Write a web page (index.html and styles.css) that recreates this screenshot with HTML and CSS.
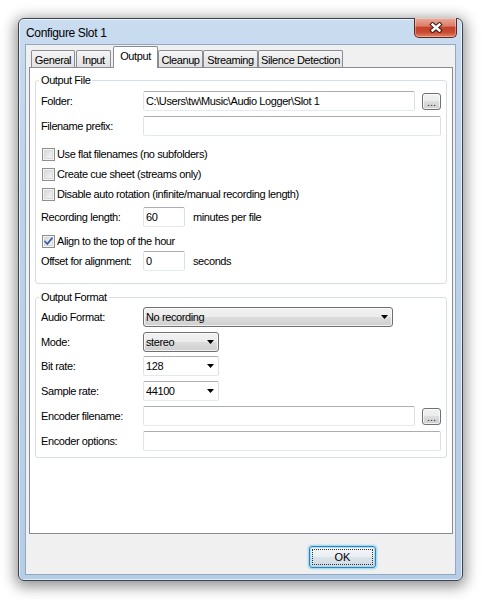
FILE: index.html
```html
<!DOCTYPE html>
<html>
<head>
<meta charset="utf-8">
<title>Configure Slot 1</title>
<link rel="stylesheet" href="styles.css">
</head>
<body>
<div class="window">
  <div class="titlebar">
    <span class="title">Configure Slot 1</span>
    <div class="close">
      <svg width="14" height="11" viewBox="0 0 14 11"><path d="M3.5 2.5 L10.5 8.5 M10.5 2.5 L3.5 8.5" stroke="#3d1711" stroke-width="4.4" stroke-linecap="square" fill="none"/><path d="M3.5 2.5 L10.5 8.5 M10.5 2.5 L3.5 8.5" stroke="#ffffff" stroke-width="2.4" stroke-linecap="square" fill="none"/></svg>
    </div>
  </div>
  <div class="client">
    <div class="tabctl">
      <div class="tabs">
        <div class="tab w-general">General</div>
        <div class="tab w-input">Input</div>
        <div class="tab sel w-output">Output</div>
        <div class="tab w-cleanup">Cleanup</div>
        <div class="tab w-streaming">Streaming</div>
        <div class="tab w-silence">Silence Detection</div>
      </div>
      <div class="panel">
        <fieldset class="group g1">
          <legend>Output File</legend>
          <div class="row">
            <span class="lbl">Folder:</span>
            <div class="edit grow">C:\Users\tw\Music\Audio Logger\Slot 1</div>
            <div class="browse">...</div>
          </div>
          <div class="row mt5">
            <span class="lbl">Filename prefix:</span>
            <div class="edit grow"></div>
          </div>
          <div class="row cbrow mt8">
            <span class="cb"></span><span>Use flat filenames (no subfolders)</span>
          </div>
          <div class="row cbrow">
            <span class="cb"></span><span>Create cue sheet (streams only)</span>
          </div>
          <div class="row cbrow">
            <span class="cb"></span><span>Disable auto rotation (infinite/manual recording length)</span>
          </div>
          <div class="row mt3">
            <span class="lbl">Recording length:</span>
            <div class="edit num">60</div>
            <span class="unit">minutes per file</span>
          </div>
          <div class="row cbrow mt4">
            <span class="cb checked"><svg width="11" height="11" viewBox="0 0 11 11"><path d="M2 5.5 L4.3 8 L9 2.2" stroke="#3a5aa8" stroke-width="1.8" fill="none" stroke-linecap="round" stroke-linejoin="round"/></svg></span><span>Align to the top of the hour</span>
          </div>
          <div class="row">
            <span class="lbl">Offset for alignment:</span>
            <div class="edit num">0</div>
            <span class="unit">seconds</span>
          </div>
        </fieldset>
        <fieldset class="group g2">
          <legend>Output Format</legend>
          <div class="row">
            <span class="lbl">Audio Format:</span>
            <div class="combo w-audio"><span>No recording</span><svg class="arrow" width="7" height="4" viewBox="0 0 7 4"><polygon points="0,0 7,0 3.5,4" fill="#000"/></svg></div>
          </div>
          <div class="row mt5">
            <span class="lbl">Mode:</span>
            <div class="combo w-small"><span>stereo</span><svg class="arrow" width="7" height="4" viewBox="0 0 7 4"><polygon points="0,0 7,0 3.5,4" fill="#000"/></svg></div>
          </div>
          <div class="row mt4">
            <span class="lbl">Bit rate:</span>
            <div class="dd w-small"><span>128</span><svg class="arrow" width="7" height="4" viewBox="0 0 7 4"><polygon points="0,0 7,0 3.5,4" fill="#000"/></svg></div>
          </div>
          <div class="row mt5">
            <span class="lbl">Sample rate:</span>
            <div class="dd w-small"><span>44100</span><svg class="arrow" width="7" height="4" viewBox="0 0 7 4"><polygon points="0,0 7,0 3.5,4" fill="#000"/></svg></div>
          </div>
          <div class="row mt5">
            <span class="lbl">Encoder filename:</span>
            <div class="edit grow"></div>
            <div class="browse">...</div>
          </div>
          <div class="row mt5">
            <span class="lbl">Encoder options:</span>
            <div class="edit grow"></div>
          </div>
        </fieldset>
      </div>
    </div>
    <div class="bottom">
      <div class="ok"><span class="focus">OK</span></div>
    </div>
  </div>
</div>
</body>
</html>
```

FILE: styles.css
```css
* { box-sizing: border-box; }
html, body { margin: 0; padding: 0; }
body {
  width: 482px;
  height: 600px;
  overflow: hidden;
  background: #ffffff;
  font-family: "Liberation Sans", Arial, sans-serif;
  font-size: 11px;
  letter-spacing: -0.4px;
  color: #000;
}

.window {
  margin: 18px 0 0 18px;
  width: 445px;
  height: 563px;
  border: 1px solid #3b4450;
  border-radius: 6px;
  background: linear-gradient(180deg, #c9dcf0 0%, #bcd2ea 30%, #b6cde7 100%);
  box-shadow: 0 3px 14px 3px rgba(0, 0, 0, 0.42), inset 0 0 0 1px rgba(255, 255, 255, 0.6);
  padding: 0 6px 5px 6px;
  display: flex;
  flex-direction: column;
}

.titlebar {
  height: 25px;
  flex: none;
  display: flex;
  align-items: flex-start;
  justify-content: space-between;
}
.title {
  font-size: 12px;
  letter-spacing: -0.35px;
  line-height: 14px;
  margin: 7px 0 0 1px;
  color: #000;
}
.close {
  width: 43px;
  height: 20px;
  margin-top: -1px;
  margin-right: -1px;
  border: 1px solid #5e261c;
  border-top: none;
  border-radius: 0 0 5px 5px;
  background: linear-gradient(180deg, #e9ab9c 0%, #dc7d68 42%, #c4432a 50%, #c94a30 75%, #df8466 100%);
  box-shadow: inset 0 0 0 1px rgba(255, 255, 255, 0.35);
  display: flex;
  align-items: center;
  justify-content: center;
}

.client {
  height: 531px;
  flex: none;
  background: #f0f0f0;
  border: 1px solid #93a7bf;
  padding-top: 1px;
  display: flex;
  flex-direction: column;
}

.tabctl { margin: 0 2px 0 3px; }
.tabs {
  display: flex;
  align-items: flex-end;
  height: 21px;
  padding-left: 2px;
}
.tab {
  height: 17px;
  border: 1px solid #898c95;
  border-bottom: none;
  border-radius: 2px 2px 0 0;
  background: linear-gradient(180deg, #f5f5f5 0%, #ebebeb 50%, #e1e1e1 100%);
  display: flex;
  align-items: center;
  justify-content: center;
  padding-top: 2px;
  white-space: nowrap;
}
.tab.sel {
  height: 22px;
  background: #ffffff;
  margin-bottom: -1px;
  position: relative;
  z-index: 1;
  padding-top: 0;
  padding-bottom: 4px;
}
.w-general { width: 44px; margin-right: 1px; }
.w-input { width: 35px; margin-right: 2px; }
.w-output { width: 45px; }
.w-cleanup { width: 45px; }
.w-streaming { width: 55px; }
.w-silence { width: 85px; }

.panel {
  height: 467px;
  background: #ffffff;
  border: 1px solid #898c95;
  padding: 0 5px 0 5px;
}

.group {
  margin: 6px 0 0 0;
  padding: 4px 5px 12px 5px;
  border: 1px solid #d5dfe5;
  border-radius: 3px;
  min-width: 0;
}
.group legend {
  padding: 0 2px;
  margin-left: -2px;
  line-height: 13px;
}
.g2 {
  margin-top: 7px;
  padding: 3px 5px 6px 5px;
}

.row {
  display: flex;
  align-items: center;
  height: 20px;
  white-space: nowrap;
}
.mt3 { margin-top: 3px; }
.mt4 { margin-top: 4px; }
.mt5 { margin-top: 5px; }
.mt8 { margin-top: 8px; }

.lbl { width: 102px; flex: none; }

.edit {
  height: 20px;
  border: 1px solid;
  border-color: #abadb3 #dbdfe6 #e3e9ef #e2e3ea;
  border-radius: 2px;
  background: #ffffff;
  padding-left: 2px;
  line-height: 18px;
  overflow: hidden;
}
.grow { flex: 1; min-width: 0; }
.num { width: 42px; flex: none; }
.unit { margin-left: 8px; }

.browse {
  width: 19px;
  height: 17px;
  margin-left: 7px;
  flex: none;
  border: 1px solid #707070;
  border-radius: 3px;
  background: linear-gradient(180deg, #f2f2f2 0%, #ebebeb 49%, #dddddd 50%, #cfcfcf 100%);
  box-shadow: inset 0 0 0 1px rgba(255, 255, 255, 0.7);
  font-size: 11px;
  letter-spacing: 0;
  line-height: 17px;
  text-align: center;
  color: #1d2a4a;
}

.cbrow { padding-left: 1px; }
.cb {
  width: 13px;
  height: 13px;
  flex: none;
  margin-right: 2px;
  border: 1px solid #8e8f8f;
  background: linear-gradient(135deg, #cdd0d4 0%, #e9eaec 55%, #f8f8f8 100%);
  box-shadow: inset 0 0 0 1px #f4f4f4, inset 0 0 0 2px #d9dadc;
  display: flex;
  align-items: center;
  justify-content: center;
}
.cb svg { display: block; }

.combo, .dd {
  height: 20px;
  flex: none;
  display: flex;
  align-items: center;
  justify-content: space-between;
  padding: 0 4px 0 2px;
}
.combo {
  border: 1px solid #707070;
  border-radius: 3px;
  background: linear-gradient(180deg, #f2f2f2 0%, #ebebeb 49%, #dddddd 50%, #cfcfcf 100%);
  box-shadow: inset 0 0 0 1px rgba(255, 255, 255, 0.7);
}
.dd {
  border: 1px solid;
  border-color: #abadb3 #dbdfe6 #e3e9ef #e2e3ea;
  border-radius: 2px;
  background: #ffffff;
}
.arrow { display: block; flex: none; }
.w-audio { width: 250px; }
.w-small { width: 76px; }

.bottom {
  display: flex;
  justify-content: flex-end;
  margin-top: 12px;
  padding-right: 79px;
}
.ok {
  width: 67px;
  height: 22px;
  border: 1px solid #3c7fb1;
  border-radius: 3px;
  background: linear-gradient(180deg, #f4f7fa 0%, #e9eef3 49%, #dbe3ea 50%, #cfd9e3 100%);
  box-shadow: 0 0 2px 1px rgba(100, 200, 245, 0.7), inset 0 0 0 1px rgba(140, 220, 250, 0.8);
  padding: 2px;
  display: flex;
}
.focus {
  flex: 1;
  border: 1px dotted #333;
  display: flex;
  align-items: center;
  justify-content: center;
  letter-spacing: 0;
}
```
